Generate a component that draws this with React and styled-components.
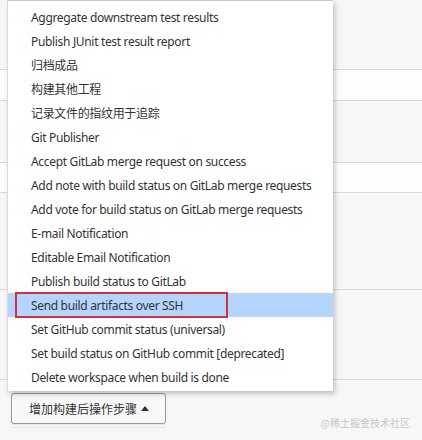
import React from "react";
import styled, { createGlobalStyle } from "styled-components";

const Global = createGlobalStyle`
  html, body { margin: 0; padding: 0; }
  body {
    width: 422px; height: 440px; overflow: hidden;
    background: #f7f7f7;
    font-family: "Noto Sans", "Noto Sans CJK SC", sans-serif;
  }
`;

const Page = styled.div`
  position: relative;
  width: 422px;
  height: 440px;
  background: #f7f7f7;
  display: flex;
  flex-direction: column;
`;

const Band = styled.div`
  height: ${(p) => p.$h}px;
  flex: none;
  background: ${(p) => (p.$white ? "#fdfdfd" : "#f7f7f7")};
  border-bottom: ${(p) => (p.$line ? "1px solid #d9d9d9" : "none")};
  box-sizing: border-box;
`;

const Footer = styled.div`
  flex: 1;
  display: flex;
  flex-direction: column;
  padding: 13px 0 0 11px;
`;

const AddButton = styled.button`
  width: 155px;
  height: 31px;
  box-sizing: border-box;
  border: 1px solid #9a9a9a;
  border-radius: 3px;
  background: #f8f8f8;
  color: #333;
  font: 12px "Noto Sans", "Noto Sans CJK SC", sans-serif;
  display: flex;
  align-items: center;
  gap: 4px;
  padding: 0 0 0 17px;
  box-shadow: 0 1px 2px rgba(0, 0, 0, 0.08);
`;

const Caret = styled.span`
  width: 0;
  height: 0;
  border-left: 4px solid transparent;
  border-right: 4px solid transparent;
  border-bottom: 5px solid #333;
  margin-top: -1px;
`;

const Underline = styled.div`
  width: 154px;
  margin-top: 3px;
  border-bottom: 1px solid #e6e6e6;
`;

const Menu = styled.ul`
  position: absolute;
  left: 7px;
  top: 0;
  width: 326px;
  margin: 0;
  padding: 4px 0 2px;
  list-style: none;
  background: #fff;
  border-top: 1px solid #c8c8c8;
  border-left: 1px solid #dcdcdc;
  box-sizing: border-box;
  box-shadow: 2px 3px 5px rgba(0, 0, 0, 0.22);
`;

const Item = styled.li`
  height: 24px;
  display: flex;
  align-items: center;
  padding-left: 23px;
  font: 12px "Noto Sans", "Noto Sans CJK SC", sans-serif;
  letter-spacing: -0.33px;
  color: #333;
  white-space: nowrap;
  background: ${(p) => (p.$active ? "#b4d5fd" : "transparent")};
`;

const Annotated = styled.span`
  display: flex;
  align-items: center;
  box-sizing: border-box;
  width: 213px;
  height: 26px;
  margin-left: -16px;
  padding-left: 14px;
  border: 2px solid #d22f3f;
`;

const Watermark = styled.div`
  position: absolute;
  right: 12px;
  bottom: 10px;
  font-size: 10px;
  color: #c8c8c8;
  font-family: "Noto Sans CJK SC", sans-serif;
`;

const items = [
  "Aggregate downstream test results",
  "Publish JUnit test result report",
  "归档成品",
  "构建其他工程",
  "记录文件的指纹用于追踪",
  "Git Publisher",
  "Accept GitLab merge request on success",
  "Add note with build status on GitLab merge requests",
  "Add vote for build status on GitLab merge requests",
  "E-mail Notification",
  "Editable Email Notification",
  "Publish build status to GitLab",
  "Send build artifacts over SSH",
  "Set GitHub commit status (universal)",
  "Set build status on GitHub commit [deprecated]",
  "Delete workspace when build is done",
];

export default function App() {
  return (
    <>
      <Global />
      <Page>
        <Band $h={70} $line />
        <Band $h={31} $white $line />
        <Band $h={62} $line />
        <Band $h={30} $white $line />
        <Band $h={97} $line />
        <Band $h={90} $line />
        <Footer>
          <AddButton>
            增加构建后操作步骤
            <Caret />
          </AddButton>
          <Underline />
        </Footer>
        <Menu>
          {items.map((t) => (
            <Item key={t} $active={t.startsWith("Send")}>
              {t.startsWith("Send") ? <Annotated>{t}</Annotated> : t}
            </Item>
          ))}
        </Menu>
        <Watermark>@稀土掘金技术社区</Watermark>
      </Page>
    </>
  );
}
